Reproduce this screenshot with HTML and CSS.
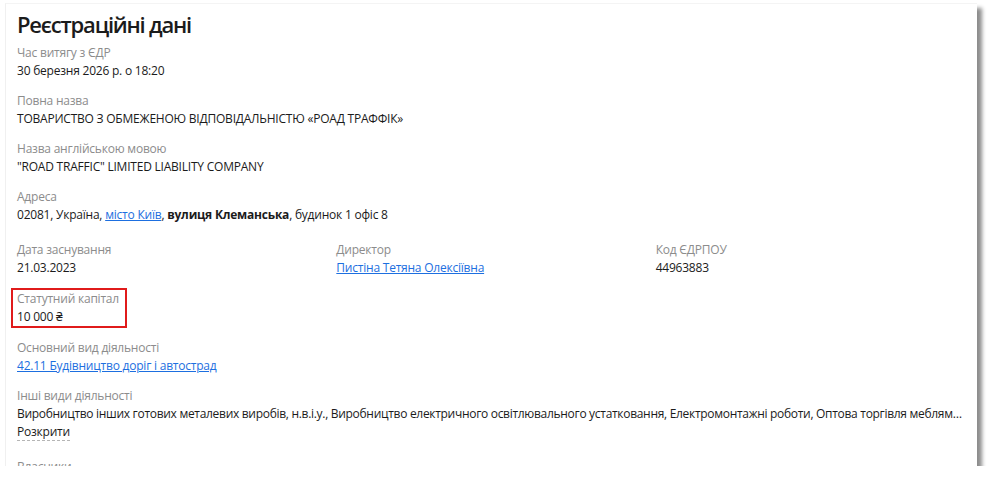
FILE: index.html
```html
<!DOCTYPE html>
<html lang="uk">

<head>
    <meta charset="UTF-8" />
    <meta name="viewport" content="width=device-width, initial-scale=1" />
    <title>Реєстраційні дані</title>
    <link rel="stylesheet" href="styles.css">
</head>

<body>

    <!-- REGISTRATION CARD -->
    <section class="card">
        <h1>Реєстраційні дані</h1>

        <div class="field">
            <div class="label">Час витягу з ЄДР</div>
            <div class="value">30 березня 2026 р. о 18:20</div>
        </div>

        <div class="field">
            <div class="label">Повна назва</div>
            <div class="value">ТОВАРИСТВО З ОБМЕЖЕНОЮ ВІДПОВІДАЛЬНІСТЮ «РОАД ТРАФФІК»</div>
        </div>

        <div class="field">
            <div class="label">Назва англійською мовою</div>
            <div class="value">"ROAD TRAFFIC" LIMITED LIABILITY COMPANY</div>
        </div>

        <div class="field">
            <div class="label">Адреса</div>
            <div class="value">02081, Україна, <a href="#">місто Київ</a>, <b>вулиця Клеманська</b>, будинок 1 офіс 8</div>
        </div>

        <div class="row">
            <div class="field">
                <div class="label">Дата заснування</div>
                <div class="value">21.03.2023</div>
            </div>
            <div class="field">
                <div class="label">Директор</div>
                <div class="value"><a href="#">Пистіна Тетяна Олексіївна</a></div>
            </div>
            <div class="field">
                <div class="label">Код ЄДРПОУ</div>
                <div class="value">44963883</div>
            </div>
        </div>

        <div class="field highlight">
            <div class="label">Статутний капітал</div>
            <div class="value">10 000 ₴</div>
        </div>

        <div class="field">
            <div class="label">Основний вид діяльності</div>
            <div class="value"><a href="#">42.11 Будівництво доріг і автострад</a></div>
        </div>

        <div class="field">
            <div class="label">Інші види діяльності</div>
            <div class="value clip">Виробництво інших готових металевих виробів, н.в.і.у., Виробництво електричного освітлювального устатковання, Електромонтажні роботи, Оптова торгівля меблями, килимами й освітлювальним приладдям, Неспеціалізована оптова торгівля</div>
            <div class="value"><span class="expand">Розкрити</span></div>
        </div>

        <div class="field owners">
            <div class="label">Власники</div>
        </div>
    </section>

</body>

</html>
```

FILE: styles.css
```css
* {
    box-sizing: border-box;
}

body {
    margin: 0;
    padding: 3px 0 0 5px;
    font-family: "Open Sans", "Noto Sans", sans-serif;
    font-size: 12px;
    letter-spacing: -0.22px;
    background: white;
    color: #1b1b1b;
}

/* --- CARD --- */
.card {
    width: 972px;
    height: 463px;
    overflow: hidden;
    background: white;
    padding: 5px 11px 0 11px;
    border-left: 1px solid #f0f0f0;
    border-top: 1px solid #f4f4f4;
    box-shadow: 5px 5px 4px rgba(0, 0, 0, 0.45);
}

.card h1 {
    margin: 0 0 5px;
    font-size: 22px;
    font-weight: 600;
    letter-spacing: -1.2px;
    line-height: 30px;
    color: #1b1b1b;
}

/* --- FIELDS --- */
.field {
    margin-bottom: 12px;
}

.label {
    line-height: 18px;
    color: #8c8c8c;
}

.value {
    line-height: 18px;
}

.value a {
    color: #1d6fe0;
    text-decoration: underline;
}

.value b {
    font-weight: 700;
}

.row {
    display: grid;
    grid-template-columns: repeat(3, 1fr);
    column-gap: 9px;
    margin-top: 17px;
}

.highlight {
    width: 116px;
    margin-left: -6px;
    padding: 0 0 0 4px;
    border: 2px solid #e01b1b;
    margin-top: -1px;
    margin-bottom: 11px;
}

.clip {
    white-space: nowrap;
    overflow: hidden;
    text-overflow: ellipsis;
    letter-spacing: -0.3px;
}

.expand {
    border-bottom: 1px dashed #b5b5b5;
    cursor: pointer;
}

.owners {
    margin-top: 17px;
}
```
